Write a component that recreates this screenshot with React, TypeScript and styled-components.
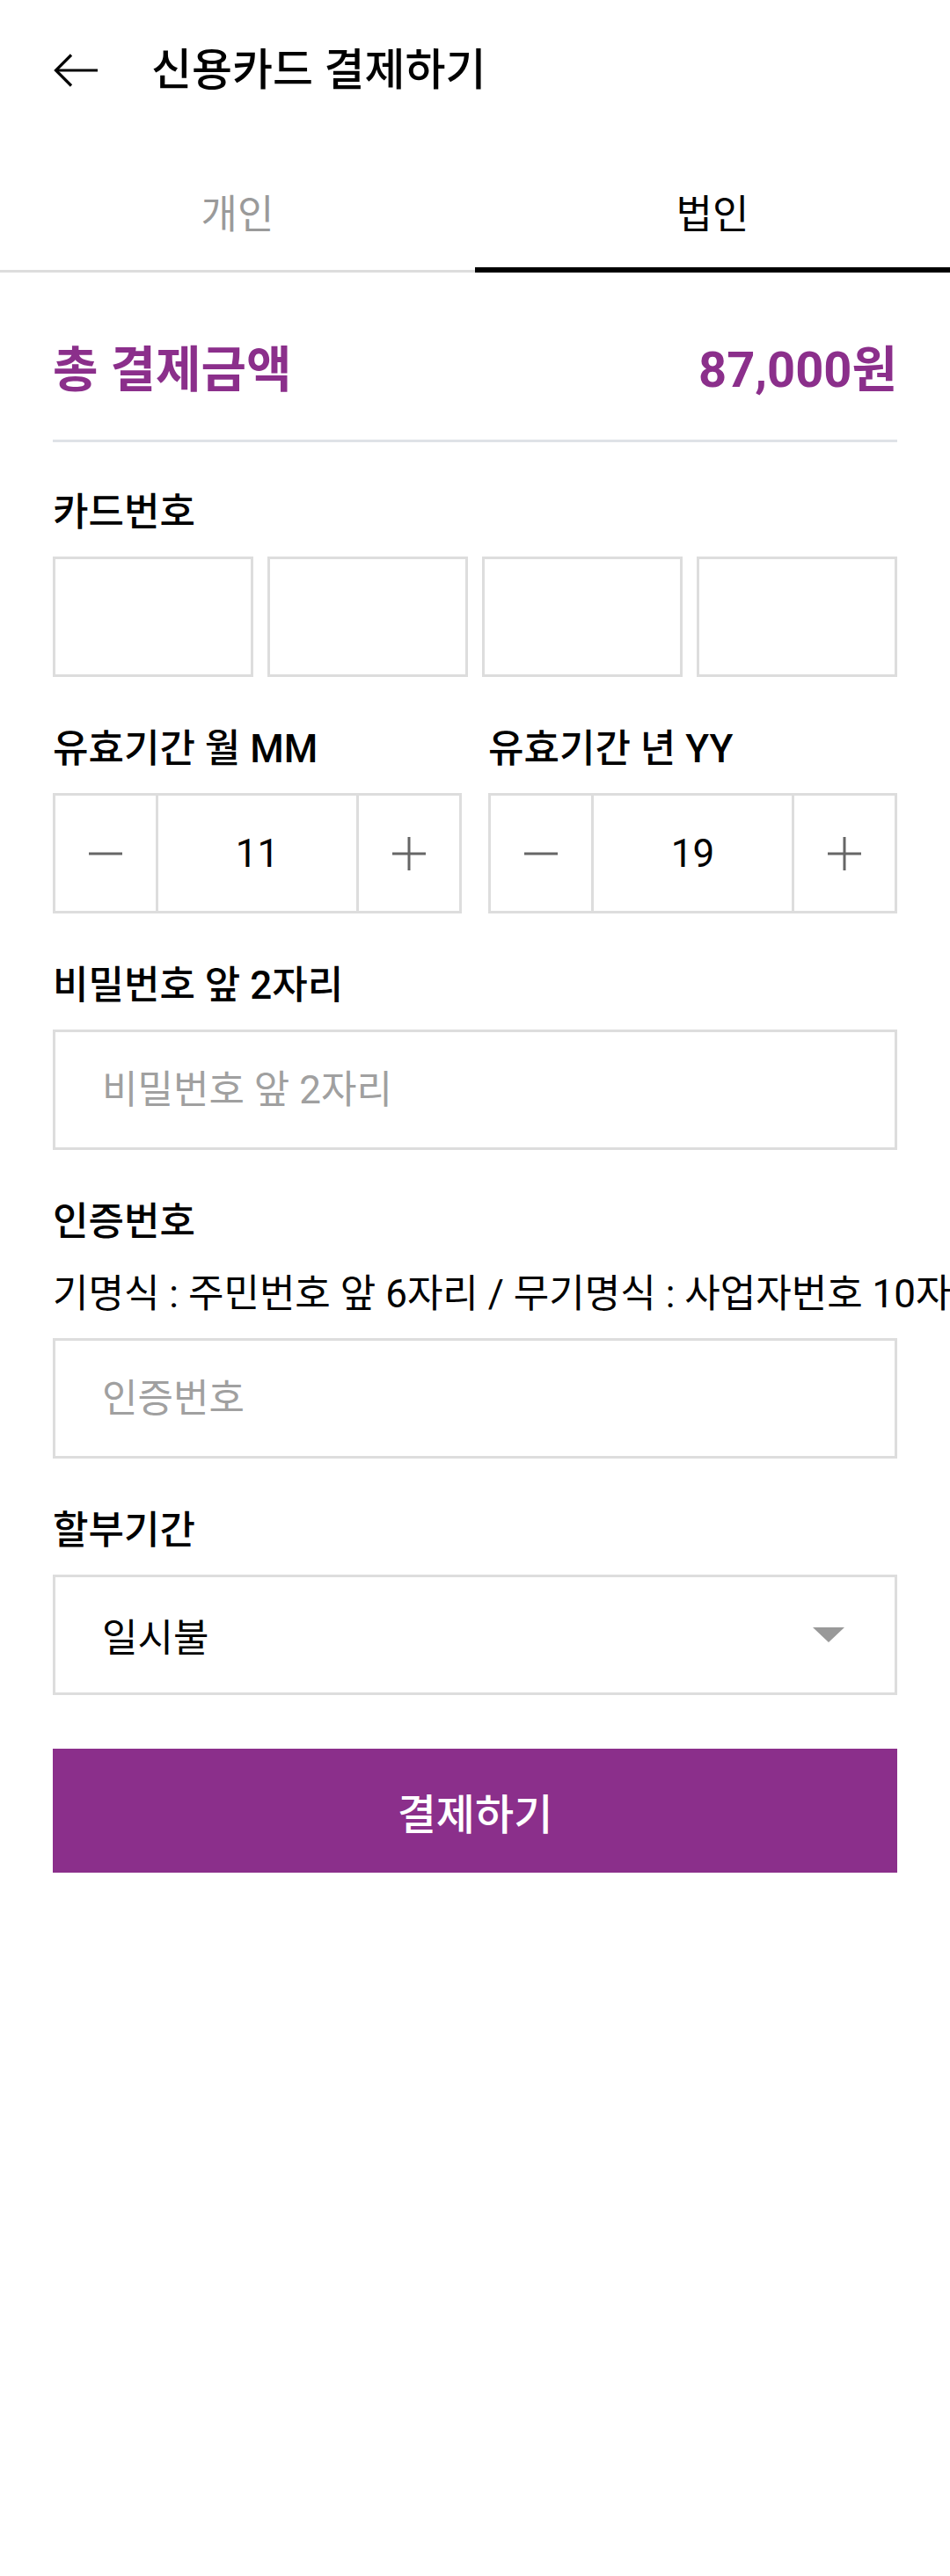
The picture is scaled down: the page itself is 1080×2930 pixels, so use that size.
import React from "react";
import styled, { createGlobalStyle } from "styled-components";

const GlobalStyle = createGlobalStyle`
  html, body {
    margin: 0;
    padding: 0;
    background: #ffffff;
    overflow-x: hidden;
  }
  body {
    font-family: Roboto, "Noto Sans CJK KR", "Noto Sans", sans-serif;
    color: #000;
  }
  * { box-sizing: border-box; }
`;

const PURPLE = "#8b2f8b";
const BORDER = "#dddddd";

const Page = styled.div`
  width: 1080px;
  min-height: 2930px;
  background: #fff;
`;

const Header = styled.header`
  height: 160px;
  display: flex;
  align-items: center;
  gap: 60px;
  padding: 0 60px;
`;

const BackButton = styled.button`
  width: 52px;
  height: 40px;
  padding: 0;
  border: 0;
  background: transparent;
  display: flex;
  align-items: center;
  justify-content: center;
  cursor: pointer;
`;

const Title = styled.h1`
  margin: 0;
  font-size: 50px;
  line-height: 60px;
  font-weight: 500;
  color: #000;
`;

const TabBar = styled.nav`
  display: flex;
`;

const Tab = styled.button<{ $active?: boolean }>`
  flex: 1;
  height: 150px;
  padding: 60px 0 0;
  margin: 0;
  border: 0;
  background: transparent;
  font-family: inherit;
  font-size: 45px;
  line-height: 50px;
  font-weight: 400;
  display: flex;
  justify-content: center;
  align-items: flex-start;
  color: ${(p) => (p.$active ? "#000" : "#9a9a9a")};
  border-bottom: ${(p) => (p.$active ? "6px solid #000" : `3px solid ${BORDER}`)};
`;

const Content = styled.main`
  padding: 0 60px;
`;

const Summary = styled.section`
  display: flex;
  justify-content: space-between;
  align-items: center;
  padding: 76px 0 44px;
  border-bottom: 3px solid #dfe2e7;
`;

const SummaryText = styled.span`
  font-size: 56px;
  line-height: 70px;
  font-weight: 700;
  color: ${PURPLE};
`;

const Form = styled.form`
  display: flex;
  flex-direction: column;
  gap: 52px;
  padding-top: 50px;
`;

const Field = styled.div`
  display: flex;
  flex-direction: column;
  gap: 20px;
  min-width: 0;
`;

const LabelGroup = styled.div`
  display: flex;
  flex-direction: column;
  gap: 22px;
`;

const Label = styled.label`
  display: block;
  font-size: 44px;
  line-height: 60px;
  font-weight: 500;
  color: #000;
`;

const Helper = styled.p`
  margin: 0;
  font-size: 44px;
  line-height: 60px;
  font-weight: 400;
  color: #000;
  white-space: nowrap;
`;

const CardRow = styled.div`
  display: grid;
  grid-template-columns: repeat(4, 1fr);
  gap: 16px;
`;

const TextInput = styled.input`
  width: 100%;
  height: 137px;
  border: 3px solid ${BORDER};
  border-radius: 0;
  background: #fff;
  padding: 0 53px;
  font-family: inherit;
  font-size: 44px;
  color: #000;
  outline: none;
  &::placeholder {
    color: #a0a0a0;
  }
`;

const ExpiryRow = styled.div`
  display: grid;
  grid-template-columns: 1fr 1fr;
  gap: 30px;
`;

const Stepper = styled.div`
  display: flex;
  height: 137px;
  border: 3px solid ${BORDER};
`;

const StepButton = styled.button<{ $side: "left" | "right" }>`
  width: 117px;
  flex: none;
  padding: 0;
  margin: 0;
  border: 0;
  background: #fff;
  display: flex;
  align-items: center;
  justify-content: center;
  ${(p) => (p.$side === "left" ? `border-right: 3px solid ${BORDER};` : `border-left: 3px solid ${BORDER};`)}
`;

const StepValue = styled.div`
  flex: 1;
  display: flex;
  align-items: center;
  justify-content: center;
  font-size: 44px;
  color: #000;
`;

const Select = styled.div`
  height: 137px;
  border: 3px solid ${BORDER};
  display: flex;
  align-items: center;
  justify-content: space-between;
  padding: 0 57px 0 53px;
  font-size: 44px;
  color: #000;
`;

const Caret = styled.span`
  width: 0;
  height: 0;
  border-left: 18px solid transparent;
  border-right: 18px solid transparent;
  border-top: 17px solid #999;
`;

const SubmitButton = styled.button`
  margin-top: 61px;
  width: 100%;
  height: 141px;
  border: 0;
  border-radius: 0;
  background: ${PURPLE};
  color: #fff;
  font-family: inherit;
  font-size: 48px;
  font-weight: 500;
  cursor: pointer;
`;

const BackArrow = () => (
  <svg width="52" height="40" viewBox="0 0 52 40" fill="none">
    <path d="M51 20H4" stroke="#000" strokeWidth="3.2" />
    <path d="M21 2.5L3.5 20L21 37.5" stroke="#000" strokeWidth="3.2" />
  </svg>
);

const MinusIcon = () => (
  <svg width="38" height="38" viewBox="0 0 38 38">
    <path d="M0 19H38" stroke="#666" strokeWidth="3" />
  </svg>
);

const PlusIcon = () => (
  <svg width="38" height="38" viewBox="0 0 38 38">
    <path d="M0 19H38M19 0V38" stroke="#666" strokeWidth="3" />
  </svg>
);

const StepperField = ({ label, value }: { label: string; value: string }) => (
  <Field>
    <Label>{label}</Label>
    <Stepper>
      <StepButton type="button" $side="left" aria-label="감소">
        <MinusIcon />
      </StepButton>
      <StepValue>{value}</StepValue>
      <StepButton type="button" $side="right" aria-label="증가">
        <PlusIcon />
      </StepButton>
    </Stepper>
  </Field>
);

export default function App() {
  return (
    <Page>
      <GlobalStyle />
      <Header>
        <BackButton aria-label="뒤로">
          <BackArrow />
        </BackButton>
        <Title>신용카드 결제하기</Title>
      </Header>
      <TabBar>
        <Tab type="button">개인</Tab>
        <Tab type="button" $active>
          법인
        </Tab>
      </TabBar>
      <Content>
        <Summary>
          <SummaryText>총 결제금액</SummaryText>
          <SummaryText>87,000원</SummaryText>
        </Summary>
        <Form onSubmit={(e) => e.preventDefault()}>
          <Field>
            <Label>카드번호</Label>
            <CardRow>
              <TextInput />
              <TextInput />
              <TextInput />
              <TextInput />
            </CardRow>
          </Field>
          <ExpiryRow>
            <StepperField label="유효기간 월 MM" value="11" />
            <StepperField label="유효기간 년 YY" value="19" />
          </ExpiryRow>
          <Field>
            <Label>비밀번호 앞 2자리</Label>
            <TextInput placeholder="비밀번호 앞 2자리" />
          </Field>
          <Field>
            <LabelGroup>
              <Label>인증번호</Label>
              <Helper>기명식 : 주민번호 앞 6자리 / 무기명식 : 사업자번호 10자리</Helper>
            </LabelGroup>
            <TextInput placeholder="인증번호" />
          </Field>
          <Field>
            <Label>할부기간</Label>
            <Select>
              <span>일시불</span>
              <Caret />
            </Select>
          </Field>
        </Form>
        <SubmitButton type="button">결제하기</SubmitButton>
      </Content>
    </Page>
  );
}
